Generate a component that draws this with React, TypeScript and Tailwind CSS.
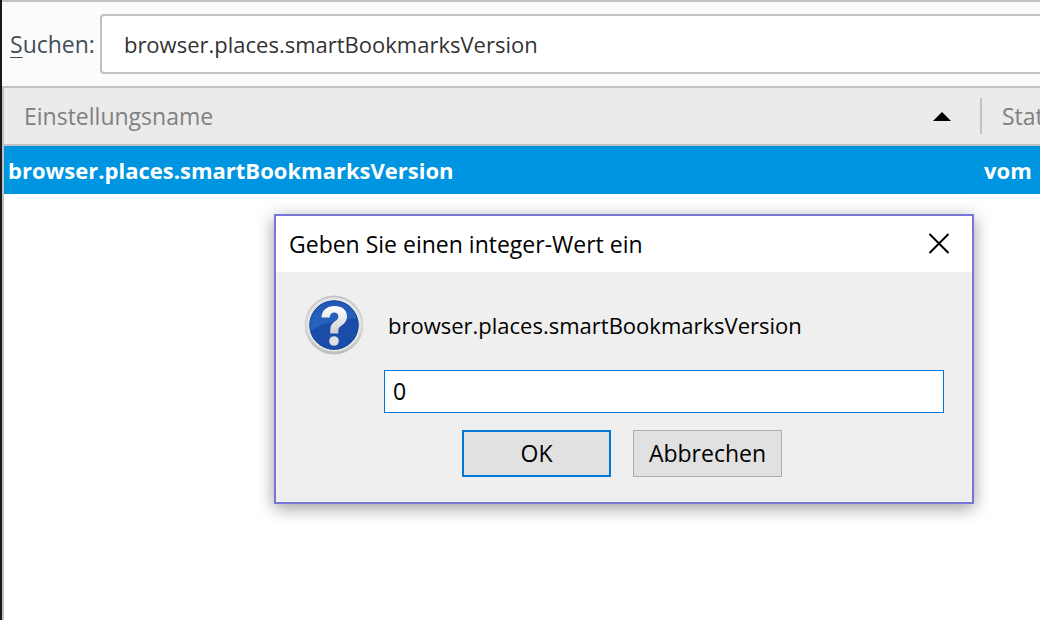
import { useState } from "react";

const PREF_NAME = "browser.places.smartBookmarksVersion";

function QuestionIcon() {
  return (
    <svg className="size-15 shrink-0" viewBox="0 0 60 60" aria-hidden="true">
      <defs>
        <linearGradient id="rim" x1="0" y1="0" x2="0" y2="1">
          <stop offset="0" stopColor="#c4c4c4" />
          <stop offset="0.5" stopColor="#dadada" />
          <stop offset="1" stopColor="#bdbdbd" />
        </linearGradient>
        <linearGradient id="disc" x1="0" y1="0" x2="0" y2="1">
          <stop offset="0" stopColor="#2158b5" />
          <stop offset="1" stopColor="#2e6cc8" />
        </linearGradient>
        <linearGradient id="mark" x1="0" y1="0" x2="0" y2="1">
          <stop offset="0" stopColor="#ffffff" />
          <stop offset="1" stopColor="#cfcfcf" />
        </linearGradient>
        <clipPath id="discClip">
          <circle cx="30" cy="30" r="24.5" />
        </clipPath>
      </defs>
      <circle cx="30" cy="30" r="29.5" fill="url(#rim)" />
      <circle cx="30" cy="29.5" r="27" fill="#e6e6e6" />
      <circle cx="30" cy="30" r="24.5" fill="url(#disc)" />
      <path d="M4 38C16 28 38 23 56 23V60H4Z" fill="#194da9" clipPath="url(#discClip)" />
      <circle cx="30" cy="30" r="24.2" fill="none" stroke="#184a9c" strokeWidth="1" />
      <path
        d="M17.5 22.5C18 15 23 11 30.5 11C38 11 43 15 43 21.5C43 26 40.5 28.5 37.5 30.5C35 32.3 34.3 33.5 34.3 36V38.5H26.3V35C26.3 30.5 28 28.5 31 26.3C33.3 24.6 34.3 23.6 34.3 21.4C34.3 19 32.8 17.6 30.3 17.6C27.6 17.6 26 19.3 25.7 22.5Z"
        fill="url(#mark)"
      />
      <circle cx="30" cy="46" r="4.8" fill="#e0e0e0" />
    </svg>
  );
}

function PromptDialog() {
  const [value, setValue] = useState("0");

  return (
    <div
      role="dialog"
      aria-labelledby="dialog-title"
      className="absolute left-[272px] top-[214px] w-[700px] border-2 border-[#7a76d6] bg-[#efefef] text-black shadow-[0_4px_16px_rgba(0,0,0,0.4)]"
    >
      <div className="flex h-14 items-center justify-between bg-white pl-[13px] pr-[22px]">
        <h2 id="dialog-title">Geben Sie einen integer-Wert ein</h2>
        <button type="button" aria-label="Schließen">
          <svg className="size-[22px]" viewBox="0 0 22 22" fill="none" stroke="black" strokeWidth="2">
            <path d="M1.5 1L20.5 20M20.5 1L1.5 20" />
          </svg>
        </button>
      </div>
      <div className="flex items-start gap-5 px-7 pt-[23px]">
        <QuestionIcon />
        <div className="grow">
          <label htmlFor="pref-value" className="flex h-15 items-center pl-1 text-[22px]">
            {PREF_NAME}
          </label>
          <input
            id="pref-value"
            type="text"
            value={value}
            onChange={(e) => setValue(e.target.value)}
            className="mt-[15px] block h-[43px] w-full border border-[#0078d7] bg-white px-2 pb-0.5 outline-none"
          />
        </div>
      </div>
      <div className="flex justify-center gap-[22px] pb-[25px] pr-1 pt-[17px]">
        <button type="button" className="h-[47px] w-[149px] border-2 border-[#0078d7] bg-[#e1e1e1] pb-0.5">
          OK
        </button>
        <button type="button" className="h-[47px] w-[149px] border border-[#adadad] bg-[#e1e1e1] pb-0.5">
          Abbrechen
        </button>
      </div>
    </div>
  );
}

export default function App() {
  const [query, setQuery] = useState(PREF_NAME);

  return (
    <div className="relative flex min-h-screen flex-col overflow-hidden border-l-2 border-[#18181a] bg-white font-['Open_Sans',sans-serif] text-[23px] leading-8">
      <div className="flex items-center gap-[5px] border-t-2 border-[#c1c1c1] bg-[#fbfbfb] py-3 pl-2">
        <label htmlFor="search" className="text-[#424f5a]">
          <span className="underline decoration-1 underline-offset-4">S</span>uchen:
        </label>
        <input
          id="search"
          type="text"
          value={query}
          onChange={(e) => setQuery(e.target.value)}
          className="h-15 min-w-0 grow rounded-l border-2 border-r-0 border-[#c1c1c1] bg-white px-[22px] text-[22px] text-[#333] outline-none"
        />
      </div>
      <div className="grow border-l-2 border-t-2 border-[#c1c1c1]">
        <table className="w-full table-fixed border-separate border-spacing-0 whitespace-nowrap text-left">
          <thead>
            <tr className="h-[58px] bg-[#ebebeb] text-[#808080]">
              <th className="border-b-2 border-[#c1c1c1] p-0 pl-5 font-normal">
                <div className="flex h-9 items-center justify-between border-r-2 border-[#c1c1c1] pr-[29px]">
                  Einstellungsname
                  <svg className="h-[9px] w-[18px]" viewBox="0 0 18 9" aria-hidden="true">
                    <path d="M9 0L18 9H0Z" fill="black" />
                  </svg>
                </div>
              </th>
              <th className="w-[58px] overflow-hidden border-b-2 border-[#c1c1c1] p-0 pl-5 font-normal">
                Stat
              </th>
            </tr>
          </thead>
          <tbody>
            <tr className="h-12 bg-[#0095e0] text-[22px] font-bold text-white">
              <td className="p-0 pl-1">{PREF_NAME}</td>
              <td className="overflow-hidden p-0 pl-0.5">vom</td>
            </tr>
          </tbody>
        </table>
      </div>
      <PromptDialog />
    </div>
  );
}
